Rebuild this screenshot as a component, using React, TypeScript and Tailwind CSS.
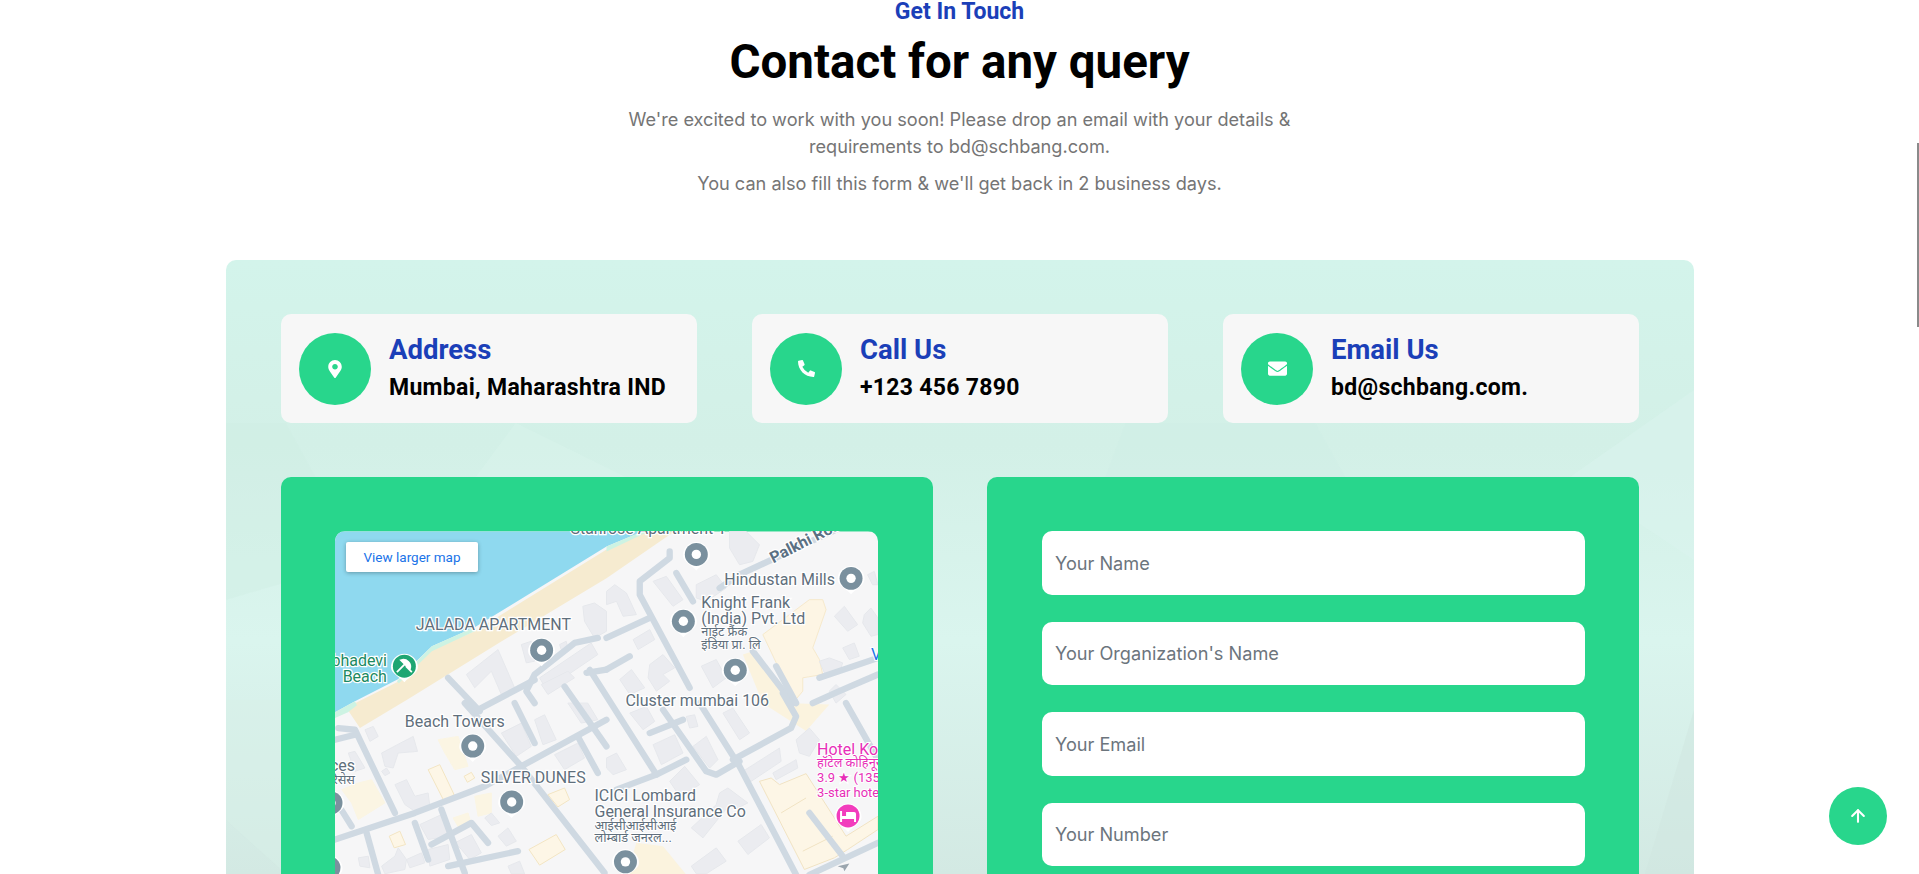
import { ArrowUp } from 'lucide-react'
import { FaEnvelope, FaMapMarkerAlt, FaPhoneAlt } from 'react-icons/fa'

const contacts = [
  { title: 'Address', value: 'Mumbai, Maharashtra IND', icon: <FaMapMarkerAlt className="w-[18px] h-[18px] text-white" /> },
  { title: 'Call Us', value: '+123 456 7890', icon: <FaPhoneAlt className="w-[17px] h-[17px] text-white" /> },
  { title: 'Email Us', value: 'bd@schbang.com.', icon: <FaEnvelope className="w-[19px] h-[19px] text-white" /> },
]

const fields = ['Your Name', "Your Organization's Name", 'Your Email', 'Your Number']

// map geometry is in 3x px, one group per quarter of the map
const roads1 = [
  '790,320 720,335 600,430 575,480 600,516',
  '340,440 435,540',
]
const roads2 = [
  '190,60 190,80 100,150 100,190 250,470',
  '210,125 260,210',
  '700,-10 400,130 340,170',
  '0,320 130,260',
  '0,415 70,375',
  '440,360 560,516',
  '510,405 570,516',
  '816,380 640,440',
  '816,430 700,480 620,516',
  '-60,425 0,415',
]
const roads3 = [
  '390,0 560,190 810,510',
  '0,410 240,330 450,250 560,190 816,50',
  '430,20 600,-70',
  '540,0 600,120',
  '730,100 790,210',
  '10,75 60,80 180,330',
  '0,110 60,95',
  '0,290 50,370',
  '95,390 130,516',
  '240,360 280,470',
  '320,320 390,510',
  '290,425 410,360 460,420',
  '340,490 550,445',
  '690,-50 816,130',
]
const roads4 = [
  '-50,-100 150,215',
  '240,170 150,215 30,260',
  '170,20 300,205 330,215 400,175',
  '130,90 230,50',
  '280,0 400,190 570,516',
  '530,-30 570,40 555,75 380,170',
  '720,0 816,170',
  '610,330 710,460',
  '610,516 816,420',
]
const buildings1 = [
  '395,430 490,355 540,470 500,490 470,420 420,470',
  '615,440 770,335 790,370 635,475',
  '745,225 780,215 816,240 816,300 780,320 750,270',
  '560,340 590,330 600,390 575,395',
  '675,340 695,330 700,350 680,355',
  '620,460 700,420 720,440 640,490',
]
const buildings2 = [
  '140,150 180,135 230,205 200,225',
  '25,160 60,185 90,250 50,255 30,210 0,220 0,180',
  '370,0 420,0 460,40 440,90 400,100 370,50',
  '270,160 330,130 360,170 300,210 270,200',
  '80,325 130,295 145,325 95,355',
  '130,400 170,370 205,410 170,430 190,450 150,480 125,440',
  '40,445 75,415 115,470 70,490',
  '285,405 330,385 360,440 320,470',
  '685,255 715,225 755,280 725,300',
  '775,250 795,230 816,260 816,310 795,315 770,275',
  '710,350 745,335 760,375 730,385',
  '640,390 670,380 710,395 700,425 655,425',
  '785,130 805,120 816,160 800,160',
  '670,480 690,460 720,490 690,516',
]
const buildings3 = [
  '140,150 235,100 248,145 190,150 175,195 150,190',
  '180,245 215,230 240,280 280,270 285,310 240,325 210,305',
  '90,80 115,70 130,100 105,115',
  '140,205 155,195 165,210 150,218',
  '40,150 60,145 90,195 60,205',
  '500,90 560,60 590,130 545,160',
  '600,50 630,35 665,110 625,125',
  '660,155 730,120 750,165 690,200',
  '255,365 320,335 340,400 280,410',
  '700,0 760,0 790,50 740,60',
  '490,400 520,375 545,415 515,430',
  '450,345 470,330 495,360 470,368',
  '140,490 180,460 190,435 215,470 210,500 150,513',
  '215,470 260,450 270,480 225,495',
  '280,440 340,425 345,470 285,490',
  '360,420 410,395 440,450 405,470 380,440',
  '520,490 555,475 570,513 530,513',
  '70,465 100,460 105,495 75,490',
]
const buildings4 = [
  '240,40 265,35 275,70 250,75',
  '260,130 300,100 335,170 310,195',
  '140,125 205,95 230,150 165,185',
  '190,235 235,190 280,245 240,270 210,265',
  '0,165 30,150 60,200 20,215 0,195',
  '70,30 120,10 145,55 110,80',
  '350,30 380,15 430,90 400,110',
  '410,205 520,135 525,175 435,235',
  '500,210 570,170 575,195 510,230',
  '340,270 365,255 425,300 395,315 370,305 290,405 255,375 330,305',
  '395,415 465,365 490,405 425,455',
  '255,490 330,435 360,475 320,500 300,513 270,513',
  '570,110 610,75 640,110 610,160 580,150',
]
const tan3 = [
  '280,200 315,185 358,275 328,295',
  '388,220 410,208 420,225 398,238',
  '163,400 195,385 212,425 178,435',
  '583,440 665,395 692,440 615,487',
  '640,275 690,255 705,290 670,312',
]
const pale3 = [
  '310,110 370,100 400,190 360,200 330,150',
  '420,280 470,270 470,330 430,340',
  '355,345 400,330 410,365 375,380',
  '20,260 70,240 110,230 150,300 70,350 50,300',
]
const pins = [
  [207, 119], [362, 23], [517, 47], [349, 90], [401, 139], [138, 215], [177, 271], [291, 331], [-4, 272], [-6, 337],
]
const labels: [string, number, number, ('start' | 'end')?][] = [
  ['Stanrose Apartment 1', 392, 3, 'end'],
  ['JALADA APARTMENT', 81, 99],
  ['Hindustan Mills', 390, 54],
  ['Knight Frank', 367, 77],
  ['(India) Pvt. Ltd', 367, 93],
  ['Cluster mumbai 106', 291, 175],
  ['Beach Towers', 70, 196],
  ['SILVER DUNES', 146, 252],
  ['ICICI Lombard', 260, 270],
  ['General Insurance Co', 260, 286],
  ['ces', 20, 240, 'end'],
]
const smallLabels: [string, number, number, ('start' | 'end')?][] = [
  ['नाईट फ्रैंक', 367, 105],
  ['इंडिया प्रा. लि', 367, 118],
  ['आईसीआईसीआई', 260, 299],
  ['लोम्बार्ड जनरल...', 260, 311],
  ['रिसेस', 20, 253, 'end'],
]
const mapFont = 'Roboto, "Noto Sans", sans-serif'

function Roads({ list }: { list: string[] }) {
  return (
    <>
      {list.map((r) => (
        <polyline key={r} points={r} fill="none" stroke="#cfd9e2" strokeWidth="19" strokeLinecap="round" strokeLinejoin="round" />
      ))}
    </>
  )
}

function Blocks({ list, fill = '#ebecf0', stroke = '#e6e8ec' }: { list: string[]; fill?: string; stroke?: string }) {
  return (
    <>
      {list.map((b) => (
        <polygon key={b} points={b} fill={fill} stroke={stroke} strokeWidth="3" />
      ))}
    </>
  )
}

function MapDrawing() {
  return (
    <svg viewBox="0 0 544 500" className="w-full h-full block">
      <rect width="544" height="500" fill="#f6f6f7" />
      <polygon points="0,181 20,172 64,150 97,118 140,100 272,18 305,0 340,0 272,47 167,110 73,168 25,197 13,179" fill="#f6ebd0" />
      <polygon points="0,0 308,0 272,15 140,96 97,115 63,148 20,170 0,181" fill="#8fd9ef" />
      <polygon points="97,115 140,96 142,99 97,120 64,152 62,150" fill="#cdf3e3" />
      <polygon points="0,181 20,170 22,174 13,181 0,187" fill="#cdf3e3" />
      <polygon points="272,15 308,0 314,0 272,20" fill="#cdf3e3" />

      <g transform="scale(0.3333)">
        <Blocks list={buildings1} />
        <g transform="translate(816 0)">
          <polygon points="470,310 610,205 650,205 660,235 620,350 640,385 650,430 590,440 590,480 565,510" fill="#fdf5e4" stroke="#f6e9cc" strokeWidth="3" />
          <polygon points="410,370 440,360 560,516 670,520 600,600 470,516" fill="#fbf3de" />
          <Blocks list={buildings2} />
          <Roads list={roads2} />
        </g>
        <g transform="translate(0 516)">
          <Blocks list={pale3} fill="#fbf5e3" stroke="#fbf5e3" />
          <Blocks list={tan3} fill="#fdf6e6" stroke="#f3e5c3" />
          <Blocks list={buildings3} />
          <Roads list={roads3} />
        </g>
        <g transform="translate(816 516)">
          <polygon points="460,235 495,225 520,245 600,212 720,400 816,340 816,380 725,440 685,465 595,500" fill="#fdf6e6" stroke="#f1e3c3" strokeWidth="3" />
          <path d="M525 330 L600 285 M590 445 L680 400" fill="none" stroke="#f1e3c3" strokeWidth="3" />
          <polygon points="90,420 170,430 240,516 60,516" fill="#fbf3de" />
          <Blocks list={buildings4} />
          <Roads list={roads4} />
          <polygon points="695,490 730,482 715,505 712,496" fill="#9aa5ae" />
        </g>
        <Roads list={roads1} />
      </g>

      {pins.map(([x, y]) => (
        <g key={`${x}-${y}`}>
          <path d={`M${x - 13.5} ${y + 1} a13.500 13.500 0 1 1 27 0 c0 6 -8 9 -13.500 15 c-5.500 -6 -13.500 -9 -13.500 -15z`} fill="#ffffff" />
          <circle cx={x} cy={y} r="11.500" fill="#7a909e" />
          <circle cx={x} cy={y} r="4.700" fill="#ffffff" />
        </g>
      ))}

      {/* beach pin */}
      <path d="M56 136 a13.500 13.500 0 1 1 27 0 c0 6 -8 9 -13.500 15 c-5.500 -6 -13.500 -9 -13.500 -15z" fill="#ffffff" />
      <circle cx="69.500" cy="135" r="11.500" fill="#1ea672" />
      <path d="M62 141 L72 131 M66 129 a7 7 0 0 1 9 9 z M71 135 L77 141" stroke="#fff" strokeWidth="1.800" fill="#fff" />

      {/* hotel pin */}
      <path d="M500.500 286 a13.500 13.500 0 1 1 27 0 c0 6 -8 9 -13.500 15 c-5.500 -6 -13.500 -9 -13.500 -15z" fill="#ffffff" />
      <circle cx="514" cy="285" r="11.500" fill="#f23cbd" />
      <path d="M506 280 h2 v5 h4 v-4 h8 a2 2 0 0 1 2 2 v8 h-2 v-3 h-12 v3 h-2z" fill="#fff" />

      {labels.map(([t, x, y, anchor]) => (
        <text key={t} x={x} y={y} textAnchor={anchor ?? 'start'} fontFamily={mapFont} fontSize="16" fill="#5f6f7c" stroke="#fff" strokeWidth="2.500" paintOrder="stroke">
          {t}
        </text>
      ))}
      {smallLabels.map(([t, x, y, anchor]) => (
        <text key={t} x={x} y={y} textAnchor={anchor ?? 'start'} fontFamily={mapFont} fontSize="12.800" fill="#5f6f7c" stroke="#fff" strokeWidth="2" paintOrder="stroke">
          {t}
        </text>
      ))}
      <text x="439" y="32" transform="rotate(-27 439 32)" fontFamily={mapFont} fontSize="16" fontWeight="700" fill="#5b7083" stroke="#fff" strokeWidth="2.500" paintOrder="stroke">Palkhi Road</text>
      <text x="52" y="135" textAnchor="end" fontFamily={mapFont} fontSize="16" fill="#1b8a62" stroke="#fff" strokeWidth="2.500" paintOrder="stroke">Prabhadevi</text>
      <text x="52" y="151" textAnchor="end" fontFamily={mapFont} fontSize="16" fill="#1b8a62" stroke="#fff" strokeWidth="2.500" paintOrder="stroke">Beach</text>
      <text x="483" y="224" fontFamily={mapFont} fontSize="16" fill="#e72fb8" stroke="#fff" strokeWidth="2" paintOrder="stroke">Hotel Kohinoor</text>
      <text x="483" y="236" fontFamily={mapFont} fontSize="12.800" fill="#e72fb8" stroke="#fff" strokeWidth="2" paintOrder="stroke">हॉटेल कोहिनूर</text>
      <text x="483" y="251" fontFamily={mapFont} fontSize="13" fill="#e72fb8" stroke="#fff" strokeWidth="2" paintOrder="stroke">3.9 ★ (135)</text>
      <text x="483" y="266" fontFamily={mapFont} fontSize="13" fill="#e72fb8" stroke="#fff" strokeWidth="2" paintOrder="stroke">3-star hotel</text>
      <text x="537" y="129" fontFamily={mapFont} fontSize="16" fill="#1a73e8" stroke="#fff" strokeWidth="2" paintOrder="stroke">Vi</text>
    </svg>
  )
}

function PanelFacets() {
  return (
    <svg viewBox="0 0 1469 614" preserveAspectRatio="none" className="absolute inset-0 w-full h-full pointer-events-none">
      <defs>
        <linearGradient id="panelBase" x1="0" y1="0" x2="0" y2="1">
          <stop offset="0" stopColor="#d3f4eb" />
          <stop offset="0.3" stopColor="#d3f0e7" />
          <stop offset="0.62" stopColor="#daf5ee" />
          <stop offset="1" stopColor="#d3e9e3" />
        </linearGradient>
      </defs>
      <rect width="1469" height="614" fill="url(#panelBase)" />
      <polygon points="60,163 135,300 0,340 0,163" fill="#d0ede4" fillOpacity="0.4" />
      <polygon points="290,163 400,217 250,217" fill="#dcf5ee" fillOpacity="0.4" />
      <polygon points="0,440 60,440 60,614 0,560" fill="#d7efe8" fillOpacity="0.5" />
      <polygon points="1469,130 1469,300 1345,217" fill="#dcf5ef" fillOpacity="0.45" />
      <polygon points="900,163 1090,163 1120,217 880,217" fill="#cfeee5" fillOpacity="0.4" />
      <polygon points="1469,450 1469,614 1420,614" fill="#cfe5df" fillOpacity="0.5" />
    </svg>
  )
}

export default function App() {
  return (
    <div className="relative h-[874px] overflow-hidden bg-white font-['Inter',sans-serif]">
      <div className="text-center">
        <h5 className="font-['Roboto',sans-serif] font-bold text-[23px] leading-[22px] pt-[1px] text-[#1b3fb8]">Get In Touch</h5>
        <h1 className="font-['Roboto',sans-serif] font-bold text-[47.500px] leading-[58px] text-black mt-[10px]">Contact for any query</h1>
        <div className="mx-auto w-[700px] mt-[15px] text-[18.150px] leading-[27px] text-[#757575]">
          <p>We're excited to work with you soon! Please drop an email with your details &amp; requirements to bd@schbang.com.</p>
          <p className="mt-[10px]">You can also fill this form &amp; we'll get back in 2 business days.</p>
        </div>
      </div>

      <section className="relative ml-[226px] w-[1468px] mt-[63px] rounded-t-[10px] overflow-hidden px-[55px] pt-[54px] h-[614px]">
        <PanelFacets />
        <div className="relative grid grid-cols-3 gap-[55px]">
          {contacts.map((c) => (
            <div key={c.title} className="flex items-center gap-[18px] bg-[#f7f7f7] rounded-[10px] px-[18px] h-[109px]">
              <div className="w-[72px] h-[72px] rounded-full bg-[#28d68c] flex items-center justify-center shrink-0">{c.icon}</div>
              <div className="font-['Roboto',sans-serif] font-bold">
                <div className="text-[27.500px] leading-[36px] text-[#1b3fb8] -mt-[1px]">{c.title}</div>
                <div className="text-[23px] leading-[34px] tracking-[0.3px] text-black mt-[3px]">{c.value}</div>
              </div>
            </div>
          ))}
        </div>

        <div className="relative grid grid-cols-2 gap-[54px] mt-[54px]">
          <div className="bg-[#28d68c] rounded-[10px] pl-[54px] pr-[55px] pt-[54px] h-[600px]">
            <div className="relative h-[500px] rounded-[10px] overflow-hidden">
              <MapDrawing />
              <a className="absolute left-[11px] top-[11px] w-[132px] h-[30px] bg-white rounded-[2px] shadow-[0_1px_4px_rgba(0,0,0,0.3)] flex items-center justify-center text-[13.500px] text-[#1a73e8] font-['Roboto',sans-serif]">View larger map</a>
            </div>
          </div>
          <form className="bg-[#28d68c] rounded-[10px] pl-[55px] pr-[54px] pt-[54px] h-[600px] flex flex-col gap-[27px]">
            {fields.map((f) => (
              <input
                key={f}
                placeholder={f}
                className="h-[63.500px] shrink-0 bg-white rounded-[10px] pl-[13px] pr-[14px] text-[18.150px] outline-none placeholder:text-[#6c757d]"
              />
            ))}
          </form>
        </div>
      </section>

      <button className="absolute right-[32px] bottom-[29px] w-[58px] h-[58px] rounded-full bg-[#28d68c] flex items-center justify-center">
        <ArrowUp className="w-[20px] h-[20px] text-white" strokeWidth={2.5} />
      </button>
      <div className="absolute right-0 top-[143px] w-[2px] h-[184px] bg-[#8a8a8a]" />
    </div>
  )
}
